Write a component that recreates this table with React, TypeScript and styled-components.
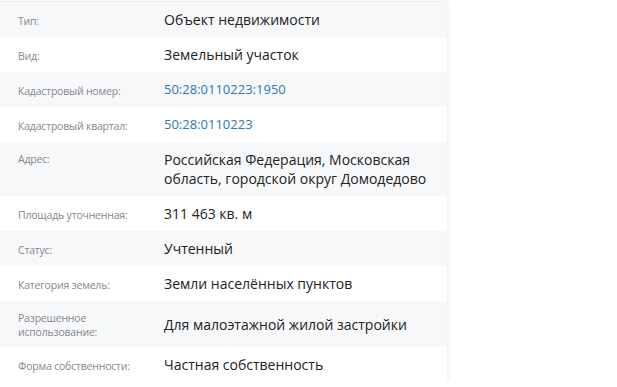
import React from 'react';
import styled, { createGlobalStyle } from 'styled-components';

type Item = {
  label: string;
  value: string;
  link?: boolean;
  top?: boolean;
};

const items: Item[] = [
  { label: 'Тип:', value: 'Объект недвижимости' },
  { label: 'Вид:', value: 'Земельный участок' },
  { label: 'Кадастровый номер:', value: '50:28:0110223:1950', link: true },
  { label: 'Кадастровый квартал:', value: '50:28:0110223', link: true },
  { label: 'Адрес:', value: 'Российская Федерация, Московская область, городской округ Домодедово', top: true },
  { label: 'Площадь уточненная:', value: '311 463 кв. м' },
  { label: 'Статус:', value: 'Учтенный' },
  { label: 'Категория земель:', value: 'Земли населённых пунктов' },
  { label: 'Разрешенное использование:', value: 'Для малоэтажной жилой застройки' },
  { label: 'Форма собственности:', value: 'Частная собственность' },
];

const App = () => {
  return (
    <>
      <GlobalStyle />
      <Panel>
        {items.map((item) => (
          <Row key={item.label} $top={item.top}>
            <Label>{item.label}</Label>
            {item.link ? <LinkValue href="#">{item.value}</LinkValue> : <Value>{item.value}</Value>}
          </Row>
        ))}
      </Panel>
    </>
  );
};

const GlobalStyle = createGlobalStyle`
  body {
    margin: 0;
    background: #ffffff;
    font-family: "Open Sans", "Noto Sans", sans-serif;
  }
`;

const Panel = styled.div`
  width: 447px;
  margin-top: 1px;
  border-top: 1px solid #eceef1;
  box-shadow: 2px 0 4px rgba(0, 0, 0, 0.06);
  background: #ffffff;
`;

const Row = styled.div<{ $top?: boolean }>`
  display: grid;
  grid-template-columns: 146px 1fr;
  align-items: ${(p) => (p.$top ? 'start' : 'center')};
  min-height: 35px;
  box-sizing: border-box;
  padding: 8px 10px 8px 18px;

  &:nth-child(odd) {
    background: #f7f8fa;
  }
`;

const Label = styled.div`
  font-size: 10.5px;
  line-height: 14px;
  letter-spacing: -0.2px;
  color: #85888d;
  padding-right: 10px;
  padding-top: 2px;
`;

const Value = styled.div`
  font-size: 14px;
  line-height: 19px;
  color: #222222;
`;

const LinkValue = styled.a`
  font-size: 13px;
  line-height: 19px;
  color: #2b78b0;
  text-decoration: none;
`;

export default App;
